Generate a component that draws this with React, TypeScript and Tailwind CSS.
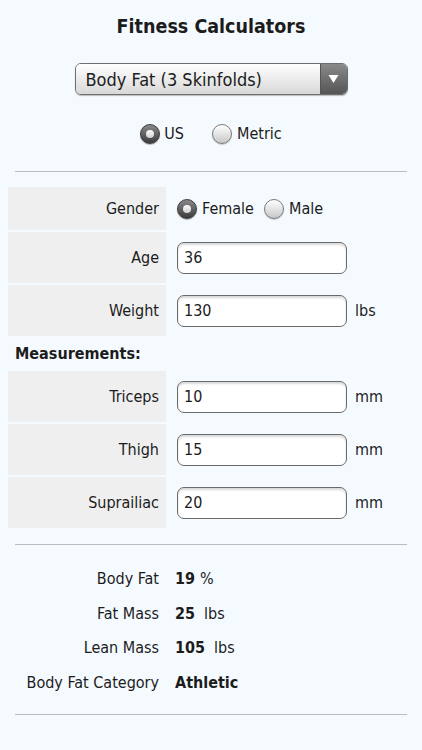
import React from 'react';

const Radio = ({ checked }: { checked: boolean }) =>
  checked ? (
    <span className="flex h-[20px] w-[20px] shrink-0 items-center justify-center rounded-full border border-[#3a3a3a] bg-gradient-to-b from-[#8a8a8a] to-[#3c3c3c] shadow-[0_1px_1px_rgba(0,0,0,0.3)]">
      <span className="h-[8px] w-[8px] rounded-full bg-gradient-to-b from-[#ffffff] to-[#cfcfcf]" />
    </span>
  ) : (
    <span className="block h-[20px] w-[20px] shrink-0 rounded-full border border-[#7a7a7a] bg-gradient-to-b from-[#ffffff] to-[#c8c8c8] shadow-[0_1px_1px_rgba(0,0,0,0.2)]" />
  );

const Field = ({ value }: { value: string }) => (
  <div className="flex h-[32px] w-[170px] items-center rounded-[7px] border-[1.5px] border-[#6a6a6a] bg-white pl-[6px] text-[16px] shadow-[inset_0_2px_2px_rgba(0,0,0,0.15)]">
    {value}
  </div>
);

const Row = ({ label, h, children }: { label: string; h: string; children: React.ReactNode }) => (
  <div className={`flex items-center ${h}`}>
    <div className="flex h-full w-[158px] items-center justify-end bg-[#efefef] pr-[7px]">{label}</div>
    <div className="ml-[11px] flex items-center">{children}</div>
  </div>
);

const Result = ({ label, value, unit, gap }: { label: string; value: string; unit?: string; gap?: string }) => (
  <div className="flex h-[34.5px] items-center">
    <div className="w-[159px] text-right">{label}</div>
    <div className="ml-[16px] flex items-baseline">
      <span className="font-bold">{value}</span>
      {unit && <span className={gap}>{unit}</span>}
    </div>
  </div>
);

const App: React.FC = () => {
  return (
    <div className="min-h-screen bg-[#f5faff] text-[16px] text-[#1c1c1c] font-['Tahoma','DejaVu_Sans_Condensed','DejaVu_Sans',sans-serif]">
      <h1 className="pt-[14px] text-center text-[19.5px] font-bold leading-[26px]">Fitness Calculators</h1>

      {/* calculator picker */}
      <div className="mt-[23px] flex justify-center">
        <div className="flex h-[32px] w-[273px] overflow-hidden rounded-[6px] border border-[#6e6e6e] shadow-[0_1px_1px_rgba(0,0,0,0.25)]">
          <div className="flex flex-1 items-center bg-gradient-to-b from-[#ffffff] to-[#d8d8d8] pl-[10px] text-[18px]">
            Body Fat (3 Skinfolds)
          </div>
          <div className="flex w-[27px] items-center justify-center border-l border-[#555] bg-gradient-to-b from-[#8a8a8a] to-[#555555]">
            <svg width="11" height="10" viewBox="0 0 11 10">
              <path d="M0.5 1 L10.5 1 L5.5 9 Z" fill="#fff" />
            </svg>
          </div>
        </div>
      </div>

      {/* units */}
      <div className="mt-[29px] flex h-[20px] items-center justify-center">
        <Radio checked />
        <span className="ml-[4px]">US</span>
        <span className="ml-[28px] flex">
          <Radio checked={false} />
        </span>
        <span className="ml-[5px]">Metric</span>
      </div>

      <div className="mx-[15px] mt-[27px] h-px bg-[#b8bcc0]" />

      <div className="mt-[15px] flex flex-col gap-[2px] pl-[8px]">
        <Row label="Gender" h="h-[43px]">
          <Radio checked />
          <span className="ml-[5px]">Female</span>
          <span className="ml-[10px] flex">
            <Radio checked={false} />
          </span>
          <span className="ml-[5px]">Male</span>
        </Row>
        <Row label="Age" h="h-[51px]">
          <Field value="36" />
        </Row>
        <Row label="Weight" h="h-[51px]">
          <Field value="130" />
          <span className="ml-[8px]">lbs</span>
        </Row>
      </div>

      <div className="flex h-[35px] items-center pl-[15px] font-bold">Measurements:</div>

      <div className="flex flex-col gap-[2px] pl-[8px]">
        <Row label="Triceps" h="h-[51px]">
          <Field value="10" />
          <span className="ml-[8px]">mm</span>
        </Row>
        <Row label="Thigh" h="h-[51px]">
          <Field value="15" />
          <span className="ml-[8px]">mm</span>
        </Row>
        <Row label="Suprailiac" h="h-[51px]">
          <Field value="20" />
          <span className="ml-[8px]">mm</span>
        </Row>
      </div>

      <div className="mx-[15px] mt-[16px] h-px bg-[#b8bcc0]" />

      <div className="mt-[17px]">
        <Result label="Body Fat" value="19" unit="%" gap="ml-[5px]" />
        <Result label="Fat Mass" value="25" unit="lbs" gap="ml-[9px]" />
        <Result label="Lean Mass" value="105" unit="lbs" gap="ml-[9px]" />
        <Result label="Body Fat Category" value="Athletic" />
      </div>

      <div className="mx-[15px] mt-[14px] h-px bg-[#b8bcc0]" />
    </div>
  );
};

export default App;
